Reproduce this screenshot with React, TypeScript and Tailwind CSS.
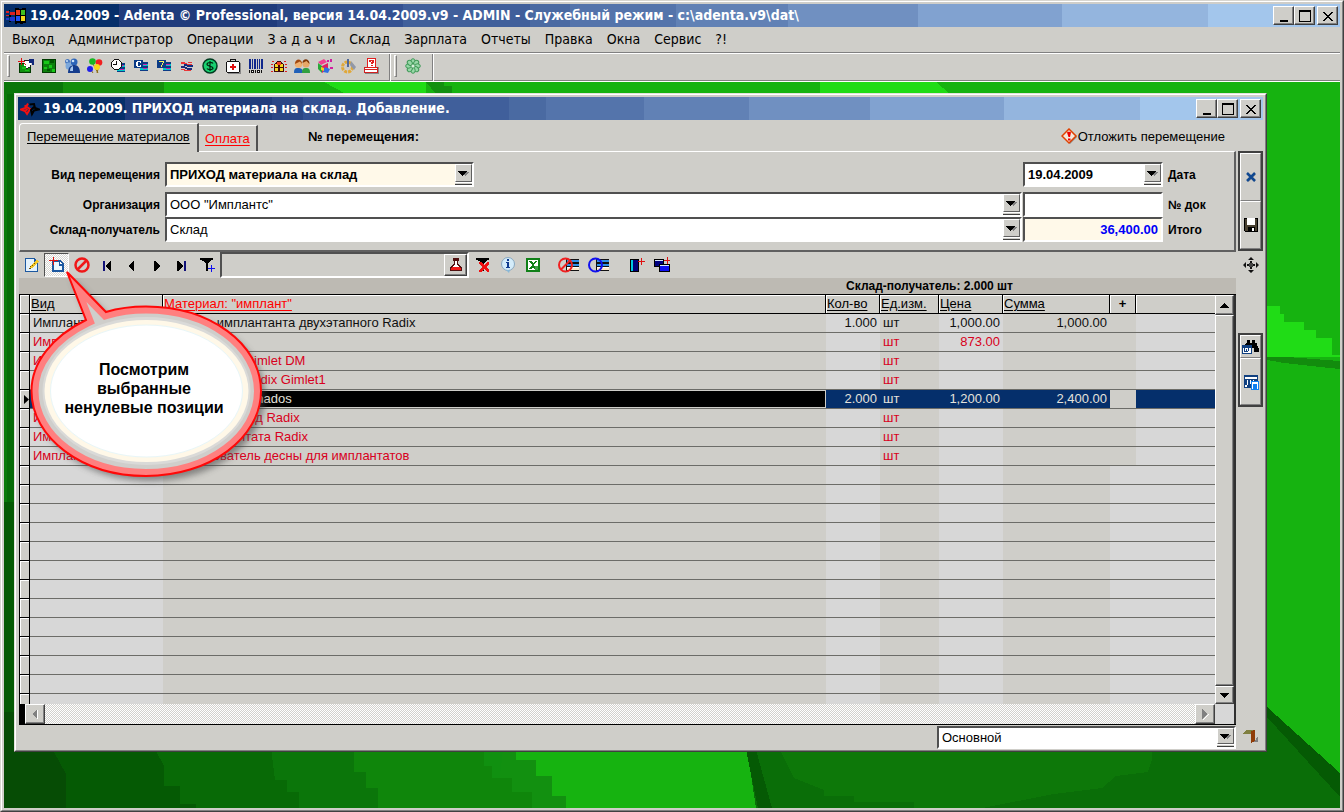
import type { ReactNode } from "react";

const TITLE_BG =
  "bg-[linear-gradient(90deg,#062f6a_8.6%,#203c7c_8.6%_20.4%,#2a4686_20.4%_22.9%,#345192_22.9%_29.9%,#405f9b_29.9%_39.4%,#4a6aa2_39.4%_42.4%,#5474ab_42.4%_50.3%,#6181b5_50.3%_58.7%,#7090c1_58.7%_68.4%,#81a2d0_68.4%_79.2%,#94b5de_79.2%_90.1%,#a3c6ec_90.1%)]";
const RAISED =
  "border border-t-white border-l-white border-r-[#404040] border-b-[#404040] bg-[#cfcec9] shadow-[inset_-1px_-1px_0_#808080]";
const SUNKEN =
  "border-t-2 border-l-2 border-r-2 border-b-2 border-t-[#505050] border-l-[#505050] border-r-white border-b-white";
const UI_FONT = "font-['DejaVu_Sans_Condensed','DejaVu_Sans',sans-serif]";

function Icon({ children, w = 16, h = 16, smooth = false }: { children: ReactNode; w?: number; h?: number; smooth?: boolean }) {
  return (
    <svg width={w} height={h} viewBox={`0 0 ${w} ${h}`} shapeRendering={smooth ? "auto" : "crispEdges"} fill="none" aria-hidden="true" className="shrink-0">
      {children}
    </svg>
  );
}

function WindowButtons() {
  const base = `flex h-[19px] w-[21px] items-center justify-center ${RAISED}`;
  return (
    <div className="flex">
      <button aria-label="Свернуть" className={base}>
        <Icon><path d="M4 12h8v2H4z" fill="#000" /></Icon>
      </button>
      <button aria-label="Развернуть" className={base}>
        <Icon><path d="M2 2h12v12H2zM3 4v9h10V4z" fill="#000" fillRule="evenodd" /></Icon>
      </button>
      <button aria-label="Закрыть" className={`ml-0.5 ${base}`}>
        <Icon><path d="M3 4h2v1h1v1h1v1h2V6h1V5h1V4h2v1h-1v1h-1v1h-1v1H9v1h1v1h1v1h1v1h1v1h-2v-1h-1v-1H9v-1H7v1H6v1H5v1H3v-1h1v-1h1v-1h1V9h1V8H6V7H5V6H4V5H3z" fill="#000" /></Icon>
      </button>
    </div>
  );
}

function Bars({ y = 4 }: { y?: number }) {
  return (
    <>
      <path d={`M7 ${y}h8v2H7zM7 ${y + 4}h8v2H7zM7 ${y + 8}h8v1H7z`} fill="#0b3b86" />
      <path d={`M7 ${y + 2}h8v2H7zM7 ${y + 6}h8v2H7z`} fill="#00c8c8" />
      <path d={`M10 ${y + 2}h4v1h-4zM10 ${y + 6}h4v1h-4z`} fill="#d020b0" />
    </>
  );
}

const mainTools: { name: string; smooth?: boolean; art: ReactNode }[] = [
  { name: "Пациент", art: <><path d="M1 5h12v10H1z" fill="#003c00" /><path d="M2 6h10v8H2z" fill="#109010" /><path d="M4 9h4v2H4zM7 12h4v1H7z" fill="#18c018" /><path d="M6 3h8v2h-1v2h-1v2h-2v1H8V8H6z" fill="#fff" /><path d="M6 2h5v1H6zM8 10h2v1H8zM10 9h2v1h-2zM12 7h1v2h-1z" fill="#222" /><path d="M11 1h5v6h-2V5h-3z" fill="#12287a" /><path d="M3 0h1v7H3zM0 3h7v1H0zM6 5h1v1H6zM7 6h1v1H7z" fill="#e01010" /></> },
  { name: "Рабочий стол", art: <><path d="M1 1h14v14H1z" fill="#003c00" /><path d="M2 2h12v12H2z" fill="#0d800d" /><path d="M3 3h5v3H3zM8 7h3v3H8zM3 9h3v2H3zM11 11h3v3h-3z" fill="#18c818" /><path d="M9 2h4v3H9zM6 11h3v2H6z" fill="#005800" /></> },
  { name: "Сотрудники", smooth: true, art: <><circle cx="3.500" cy="3.500" r="2.500" fill="#4878c0" /><circle cx="10" cy="4" r="3.500" fill="#2c64b8" /><ellipse cx="4.500" cy="8" rx="3" ry="3.500" fill="#7ca8dc" /><path d="M4 15c0-6 3-8 6.500-8s5.500 3 5.500 8z" fill="#143c8c" /><circle cx="9" cy="3" r="1.300" fill="#c8e0f8" /><path d="M6 13c0-3 1-4 3-5v5z" fill="#a8c8ee" /><circle cx="3" cy="3" r="1" fill="#c8e0f8" /></> },
  { name: "Праздники", smooth: true, art: <><path d="M6 6l5 9M12 7l-2 8M4 12l2 3" stroke="#8c6c10" /><circle cx="5.500" cy="3.500" r="3.300" fill="#18b820" /><circle cx="12" cy="4.500" r="3.300" fill="#f02020" /><circle cx="3" cy="11" r="3" fill="#2020e8" /><circle cx="10" cy="9" r="3" fill="#f8d818" /></> },
  { name: "Расписание", art: <><Bars y={5} /><path d="M4 1h5v1h1v1h1v1h1v5h-1v1h-1v1H9v1H4v-1H3v-1H2V9H1V4h1V3h1V2h1z" fill="#111" /><path d="M4 2h5v1h1v1h1v5h-1v1H9v1H4v-1H3V9H2V4h1V3h1z" fill="#fff" /><path d="M6 3h1v4H3V6h3z" fill="#111" /></> },
  { name: "Касса", art: <><Bars /><path d="M1 2h9v8H1z" fill="#0b3b86" /><path d="M4 3h4v2H7V4H5v4h2V7h1v2H4V8H3V4h1z" fill="#fff" /></> },
  { name: "Неделя", art: <><Bars /><path d="M1 2h9v8H1z" fill="#0b3b86" /><path d="M3 3h5v2H7v2H6v2H5V7h1V5h1V4H3z" fill="#f8f060" /></> },
  { name: "Обмен", art: <><path d="M2 4h4v1h2v1h5v2H8V7H6V6H2z" fill="#f03030" /><path d="M5 6h3v1h6v2H8V8H5z" fill="#102c80" /><path d="M2 8h4v1h2v1h5v2H8v-1H6v-1H2z" fill="#202878" /><path d="M2 11h4v1h6v1H5v-1H2zM9 4h4v1H9z" fill="#e83838" /></> },
  { name: "Оплата", smooth: true, art: <><circle cx="8" cy="8" r="7" fill="#18d070" stroke="#003c20" strokeWidth="1.500" /><path d="M11 5.500C10 4 5 4 5 6.300S11 8 11 10 6 12 5 10.500M8 3v10" stroke="#002810" strokeWidth="1.200" /></> },
  { name: "Лечение", art: <><path d="M3 5h13v11H3z" fill="#888" /><path d="M5 1h6v3h-1V2H6v2H5z" fill="#111" /><path d="M2 3h12v1h1v10h-1v1H2v-1H1V4h1z" fill="#111" /><path d="M2 4h12v10H2z" fill="#fff" /><path d="M7 6h2v2h2v2H9v2H7v-2H5V8h2z" fill="#e01010" /></> },
  { name: "Штрих-код", art: <><path d="M1 1h2v10H1zM4 1h1v10H4zM6 1h2v10H6zM9 1h1v10H9zM11 1h1v10h-1zM13 1h2v10h-2z" fill="#10288c" /><path d="M1 12h1v3H1zM3 12h3v3H3zM7 12h1v3H7zM9 12h3v3H9zM13 12h1v3h-1z" fill="#111" /><path d="M4 13h1v1H4zM10 13h1v1h-1z" fill="#fff" /></> },
  { name: "Склад", art: <><path d="M1 3h2v1H1zM13 3h2v1h-2zM0 6h2v1H0zM14 6h2v1h-2zM0 9h2v1H0zM14 9h2v1h-2zM0 13h2v1H0zM14 13h2v1h-2z" fill="#e02020" /><path d="M3 14V6h1V5h1V4h1V3h4v1h1v1h1v1h1v8z" fill="#400808" /><path d="M4 6h3v3H4zM9 6h3v3H9zM4 10h3v3H4zM9 10h3v3H9z" fill="#f4d820" /><path d="M6 4h4v3H6z" fill="#f04020" /></> },
  { name: "Клиенты", smooth: true, art: <><path d="M0 15c0-4 1-5 4-5s5 1 5 5z" fill="#2060b8" /><circle cx="4.500" cy="6" r="3.800" fill="#f0b070" /><path d="M1 6c0-6 7-6 7 0L6 3.500z" fill="#a04810" /><path d="M8 15c0-4 1-5 4-5s4 1 4 5z" fill="#30a040" /><circle cx="12" cy="6" r="3.500" fill="#e8a868" /><path d="M8.500 5c0-5 7-5 7 1l-3-3z" fill="#803808" /></> },
  { name: "Отчеты", smooth: true, art: <><path d="M1 4l6-3 3 3-6 3z" fill="#f04090" /><path d="M1 5l4 3v7l-4-4z" fill="#28a838" /><path d="M5 8l6-3v6l-6 4z" fill="#e02060" /><path d="M8 9l5 2-2 4-5-1z" fill="#3070e0" /><path d="M4 9l3 1v3l-3-1z" fill="#f0d020" /><path d="M10 2h2v2h-2zM13 1h2v3h-2zM13 9h3v2h-3z" fill="#d020a0" /></> },
  { name: "Настройки", smooth: true, art: <><circle cx="7.500" cy="9" r="5" stroke="#e0a838" strokeWidth="3" strokeDasharray="3 1" /><circle cx="7.500" cy="9" r="2" fill="#c8c8c8" /><path d="M7 1h2v8H7z" fill="#506898" /><path d="M11 3l5 6-2 3-4-5z" fill="#9098a8" /></> },
  { name: "Помощь", art: <><path d="M2 9h14v7H2z" fill="#888" /><path d="M1 9h14v6H1z" fill="#d02020" /><path d="M2 10h12v1H2zM2 12h12v2H2z" fill="#fff" /><path d="M4 0h9v10H4z" fill="#e02020" /><path d="M5 1h7v8H5z" fill="#fff" /><path d="M6 2h5v3h-1v1H8V4h1V3H8v1H6zM8 7h2v1H8z" fill="#e02020" /></> },
];

const menu = ["Выход", "Администратор", "Операции", "З а д а ч и", "Склад", "Зарплата", "Отчеты", "Правка", "Окна", "Сервис", "?!"];

function Combo({ id, value, bold = false, cream = false }: { id: string; value: string; bold?: boolean; cream?: boolean }) {
  return (
    <div className={`flex h-[25px] w-full ${SUNKEN} ${cream ? "bg-[#fff9e9]" : "bg-white"}`}>
      <select id={id} aria-label={value} defaultValue={value} className={`min-w-0 flex-1 appearance-none bg-transparent pl-[3px] text-[13px] outline-none ${bold ? "font-bold" : ""}`}>
        <option>{value}</option>
      </select>
      <span className="flex w-[17px] shrink-0 flex-col bg-[#cfcec9]">
        <span className="flex flex-1 items-center justify-center border border-t-white border-l-white border-r-[#606060] border-b-[#606060]">
          <Icon w={11} h={7}><path d="M3 2h8v1h-1v1H9v1H8v1H7V5H5z" fill="#808080" /><path d="M0 1h9v1H8v1H7v1H6v1H5v1H4V5H3V4H2V3H1V2H0z" fill="#000" /></Icon>
        </span>
        <span className="h-[3px] border-t border-b border-t-white border-b-[#404040]" />
      </span>
    </div>
  );
}

function ToolButton({ name, wide = false, pressed = false, children }: { name: string; wide?: boolean; pressed?: boolean; children: ReactNode }) {
  return (
    <button
      aria-label={name}
      className={`flex h-6 shrink-0 items-center justify-center ${wide ? "w-[30px]" : "w-[25px]"} ${pressed ? "border border-t-[#505050] border-l-[#505050] border-r-white border-b-white bg-[repeating-conic-gradient(#fff_0_25%,#d7d6d2_0_50%)] bg-[length:2px_2px]" : ""}`}
    >
      {children}
    </button>
  );
}

const Funnel = () => <path d="M1 1h13v2h-2v1h-1v1h-1v1H9v8H7V6H6V5H5V4H3V3H1z" fill="#000" />;
const TableArt = ({ ring }: { ring: ReactNode }) => (
  <Icon w={22}>
    <path d="M8 2h13v12H8z" fill="#111" />
    <path d="M9 3h12v2H9zM9 7h12v2H9z" fill="#3090e8" />
    <path d="M9 10h12v1H9z" fill="#fff" />
    <path d="M9 11h12v2H9z" fill="#ffe8c8" />
    {ring}
  </Icon>
);

type Row = { kind: string; name: string; qty?: string; unit: string; price?: string; sum?: string; state: "normal" | "zero" | "current" };
const rows: Row[] = [
  { kind: "Имплантаты", name: "Головка имплантанта двухэтапного Radix", qty: "1.000", unit: "шт", price: "1,000.00", sum: "1,000.00", state: "normal" },
  { kind: "Имплантаты", name: "Имплантат", unit: "шт", price: "873.00", state: "zero" },
  { kind: "Имплантаты", name: "Имплантаты Gimlet DM", unit: "шт", state: "zero" },
  { kind: "Имплантаты", name: "Имплантаты Radix Gimlet1", unit: "шт", state: "zero" },
  { kind: "Имплантаты", name: "Имплантат Granados", qty: "2.000", unit: "шт", price: "1,200.00", sum: "2,400.00", state: "current" },
  { kind: "Имплантаты", name: "Имплантат ввод Radix", unit: "шт", state: "zero" },
  { kind: "Имплантаты", name: "Ключ имплантата Radix", unit: "шт", state: "zero" },
  { kind: "Имплантаты", name: "Формирователь десны для имплантатов", unit: "шт", state: "zero" },
];
const emptyRows = Array.from({ length: 13 }, (_, i) => i);

function Marker({ current = false }: { current?: boolean }) {
  return (
    <td className="h-[19px] border-r border-b border-black bg-[#cfcec9] p-0 shadow-[inset_1px_1px_0_#fff]">
      {current && <svg width="5" height="9" viewBox="0 0 5 9" className="ml-1 block" aria-hidden="true"><path d="M0 0l5 4.500L0 9z" fill="#000" /></svg>}
    </td>
  );
}

function StockTable() {
  const th = "h-[19px] border-r border-b border-black bg-[#cfcec9] p-0 pl-px text-left leading-[18px] font-normal underline underline-offset-2 shadow-[inset_1px_1px_0_#fff]";
  const line = "h-[19px] overflow-hidden whitespace-nowrap border-b border-[#6c6c68] p-0 leading-[18px]";
  return (
    <table className="w-full table-fixed border-separate border-spacing-0 text-[13px]">
      <colgroup>
        <col className="w-[10px]" /><col className="w-[133px]" /><col /><col className="w-[54px]" /><col className="w-[59px]" />
        <col className="w-16" /><col className="w-[107px]" /><col className="w-[26px]" /><col className="w-[79px]" />
      </colgroup>
      <thead>
        <tr>
          <th className={th} aria-label="Строка" />
          <th className={th}>Вид</th>
          <th className={`${th} text-[#ff0000]`}>Материал: "имплант"</th>
          <th className={th}>Кол-во</th>
          <th className={th}>Ед.изм.</th>
          <th className={th}>Цена</th>
          <th className={th}>Сумма</th>
          <th className="border-r border-b border-black p-0 text-center leading-[18px] shadow-[inset_1px_1px_0_#fff]">+</th>
          <th className="border-b border-black p-0 shadow-[inset_1px_1px_0_#fff]" aria-label="Прочее" />
        </tr>
      </thead>
      <tbody>
        {rows.map((r, i) => {
          const cur = r.state === "current";
          const ink = cur ? "text-[#e4e2dc]" : r.state === "zero" ? "text-[#d80020]" : "text-[#101010]";
          const light = cur ? "bg-[#052f6b]" : "bg-[#d7d7d7]";
          const dark = cur ? "bg-[#052f6b]" : "bg-[#cfcec9]";
          return (
            <tr key={i} className={ink}>
              <Marker current={cur} />
              <td className={`${line} ${light} pl-[3px]`}>{r.kind}</td>
              <td className={`${line} pl-0.5 ${cur ? "bg-black shadow-[inset_-1px_-1px_0_#cfcec9,inset_0_1px_0_#cfcec9]" : "bg-[#cfcec9]"}`}>{r.name}</td>
              <td className={`${line} ${light} pr-[3px] text-right`}>{r.qty}</td>
              <td className={`${line} ${dark} pl-[3px]`}>{r.unit}</td>
              <td className={`${line} ${light} pr-[3px] text-right`}>{r.price}</td>
              <td className={`${line} ${dark} pr-[3px] text-right`}>{r.sum}</td>
              <td className={`${line} bg-[#cfcec9]`} />
              <td className={`${line} ${light}`} />
            </tr>
          );
        })}
        {emptyRows.map((i) => (
          <tr key={i}>
            <Marker />
            <td className={`${line} bg-[#d7d7d7]`} />
            <td className={`${line} bg-[#cfcec9]`} />
            <td className={`${line} bg-[#d7d7d7]`} />
            <td className={`${line} bg-[#cfcec9]`} />
            <td className={`${line} bg-[#d7d7d7]`} />
            <td className={`${line} bg-[#cfcec9]`} />
            <td className={`${line} bg-[#d7d7d7]`} />
            <td className={`${line} bg-[#d7d7d7]`} />
          </tr>
        ))}
      </tbody>
    </table>
  );
}

function Wallpaper() {
  return (
    <svg className="absolute inset-0 h-full w-full" viewBox="0 0 1336 726" preserveAspectRatio="none" shapeRendering="crispEdges" aria-hidden="true">
      <path d="M0 0h1336v726H0z" fill="#16b310" />
      <path d="M0 0h160v12H0z" fill="#138f0c" />
      <path d="M0 0h59v12H0z" fill="#0a760a" />
      <path d="M320 0l22 12h80V0zM816 0h116l14 12H816z" fill="#20dc16" />
      <path d="M422 0h18v4h8v8h-16z" fill="#129010" />
      <path d="M0 640h500v86H0z" fill="#109010" />
      <path d="M500 660h12v18h20v16h16v20h14v12h-70z" fill="#129010" />
      <path d="M0 660h480v24h8v12h20v14h20v16H0z" fill="#0f860b" />
      <path d="M0 650h338v20h12v20h12v16h12v20H0z" fill="#0b760a" />
      <path d="M0 650h268v24l3 24h12v12h12v16H0z" fill="#086a06" />
      <path d="M0 650h142l18 34v20h16v18h16v4H0z" fill="#055a04" />
      <path d="M0 650h38l12 20 12 22v34H0z" fill="#064c05" />
      <path d="M0 12h12v560H0z" fill="#076c07" />
      <path d="M0 12h3v408H0z" fill="#0a7a0a" />
      <path d="M0 420h12v214H0z" fill="#055a04" />
      <path d="M0 630h12v96H0z" fill="#064c05" />
      <path d="M742 660H1263V625L1336 691V726H752z" fill="#0a6e08" />
      <path d="M772 660h376v18l-4 12-32 4-14 12-48 6-72 14H910v-6h-60v-6h-30v-6l-30-12z" fill="#0d7809" />
      <path d="M742 668l12 58h14l-16-58z" fill="#055a04" />
      <path d="M1263 625l73 66v24l-73-80z" fill="#055a04" />
      <path d="M1263 224h13v8h4v8h20v8h12v8h16v17h8v2h-73z" fill="#20dc16" />
      <path d="M1263 275h20l53 4v8l-20-2-36-4-17-3z" fill="#128c0d" />
    </svg>
  );
}

function Callout() {
  return (
    <div className="pointer-events-none absolute top-[266px] left-[26px] z-10 h-[222px] w-[246px]">
      <svg width="246" height="222" viewBox="26 266 246 222" className="absolute inset-0" aria-hidden="true">
        <defs>
          <filter id="soft" x="-20%" y="-20%" width="140%" height="140%"><feGaussianBlur stdDeviation="3" /></filter>
          <path id="bubble" d="M66 271L105 311C118 307 131 305.500 145 305.500C209 305.500 260 343 260 390S209 475 145 475S30.500 437 30.500 390C30.500 361 52 335 85 319Z" />
          <clipPath id="bubbleClip"><use href="#bubble" /></clipPath>
        </defs>
        <use href="#bubble" transform="translate(4 5)" fill="#444" opacity="0.55" filter="url(#soft)" />
        <use href="#bubble" fill="#cfcecb" />
        <ellipse cx="145.500" cy="390" rx="104" ry="74" fill="#dadad8" />
        <ellipse cx="145.500" cy="390" rx="102" ry="71" fill="#fff8e8" />
        <ellipse cx="145.500" cy="390" rx="96" ry="66" fill="#fff" stroke="#e8f6f8" />
        <use href="#bubble" stroke="#ff7f7f" strokeWidth="14" fill="none" clipPath="url(#bubbleClip)" />
        <use href="#bubble" stroke="#ff0808" strokeWidth="2" fill="none" />
      </svg>
      <p className="relative pt-[93px] pr-3 text-center text-[16px] leading-[19px] font-bold">
        Посмотрим<br />выбранные<br />ненулевые позиции
      </p>
    </div>
  );
}

export default function App() {
  const lab = "self-center pr-[5px] text-right text-[12px] font-bold";
  const labRight = "self-center pl-[5px] text-[12px] font-bold";
  const box = `h-[25px] w-full min-w-0 px-[3px] text-[13px] font-bold outline-none ${SUNKEN}`;
  const side = "flex w-full items-center justify-center border border-t-white border-l-white border-r-[#808080] border-b-[#808080] bg-[#cfcec9]";
  return (
    <div className="relative flex h-screen w-full flex-col border border-t-[#d8d6d0] border-l-[#d8d6d0] border-r-[#404040] border-b-[#404040] bg-[#cfcec9] font-['Liberation_Sans',Arial,sans-serif] text-black">
      <div className="flex min-h-0 flex-1 flex-col border border-t-white border-l-white border-r-[#808080] border-b-[#808080] p-0.5">
        <header className={`flex h-[23px] shrink-0 items-center px-0.5 text-white ${TITLE_BG} ${UI_FONT}`}>
          <Icon w={20} h={20}>
            <path d="M9 2h4v1h3V2h4v15h-3v1h-3v-1h-3v1H9z" fill="#000" />
            <path d="M10 4h4v5h-4z" fill="#f03818" /><path d="M15 4h4v5h-4z" fill="#40c020" /><path d="M10 10h4v5h-4z" fill="#2050f0" /><path d="M15 10h4v5h-4z" fill="#f4d818" />
            <path d="M0 5h3v2H0zM4 6h5v3H4zM0 9h3v1H0z" fill="#e02020" /><path d="M0 12h3v2H0zM4 11h5v4H4z" fill="#2038d0" /><path d="M3 4h1v1H3zM3 9h2v2H3zM3 15h2v1H3z" fill="#000" />
          </Icon>
          <h1 className="min-w-0 flex-1 truncate pl-1 text-[14px] font-bold">19.04.2009 - Adenta © Professional, версия 14.04.2009.v9 - ADMIN - Служебный режим - c:\adenta.v9\dat\</h1>
          <WindowButtons />
        </header>
        <nav className={`flex h-[26px] shrink-0 items-center border-b border-[#808080] pl-px text-[14px] ${UI_FONT}`}>
          {menu.map((m) => <button key={m} className="px-[7px]">{m}</button>)}
        </nav>
        <div className="flex h-[29px] shrink-0 border-t border-b border-t-white border-b-white">
          <div className="flex w-[386px] items-center border-r border-b border-[#808080] pb-0.5 pl-[3px] shadow-[1px_0_0_#fff]">
            <span className="mr-2 h-[22px] w-[3px] border border-t-white border-l-white border-r-[#808080] border-b-[#808080]" />
            {mainTools.map((t) => (
              <button key={t.name} aria-label={t.name} className="flex h-[22px] w-[23px] items-center justify-start"><Icon smooth={t.smooth}>{t.art}</Icon></button>
            ))}
          </div>
          <div className="ml-px flex w-[42px] items-center border-r border-b border-[#808080] pb-0.5 pl-[3px] shadow-[1px_0_0_#fff]">
            <span className="mr-2 h-[22px] w-[3px] border border-t-white border-l-white border-r-[#808080] border-b-[#808080]" />
            <button aria-label="ICQ" className="p-0">
              <Icon smooth>
                {[0, 45, 90, 135, 180, 225, 270, 315].map((a) => <ellipse key={a} cx="8" cy="3.500" rx="2.200" ry="2.800" fill="#98d8a8" stroke="#409858" transform={`rotate(${a} 8 8)`} />)}
                <circle cx="8" cy="8" r="1.500" fill="#d8f0dc" />
              </Icon>
            </button>
          </div>
          <div className="ml-px flex-1 border-b border-[#808080]" />
        </div>

        <main className="relative flex min-h-0 flex-1 overflow-hidden pt-[11px] pr-[73px] pb-14 pl-2.5">
          <Wallpaper />
          <section className="relative flex min-h-0 min-w-0 flex-1 flex-col border border-t-[#e4e2dc] border-l-[#e4e2dc] border-r-[#404040] border-b-[#404040] bg-[#cfcec9]">
            <div className="flex min-h-0 flex-1 flex-col border border-t-white border-l-white border-r-[#808080] border-b-[#808080] px-0.5 pt-0.5">
              <header className={`flex h-[23px] shrink-0 items-center px-0.5 text-white ${TITLE_BG} ${UI_FONT}`}>
                <Icon w={20} h={18} smooth>
                  <path d="M8 3.500L5.500 8 1 9.500l4 1.500 2.500-2M4.500 5.500L10 9l-3 5-2-3" stroke="#f01010" strokeWidth="2" />
                  <path d="M9.500 4.500L14 4l1 4 4 1.500-5 1-2 3.500-1-4 3-3" stroke="#000" strokeWidth="2" />
                </Icon>
                <h2 className="min-w-0 flex-1 truncate pl-[3px] text-[14px] font-bold">19.04.2009. ПРИХОД материала на склад. Добавление.</h2>
                <WindowButtons />
              </header>

              <div className="flex min-h-0 flex-1">
                <div className="flex min-w-0 flex-1 flex-col pl-px">
                  <div className="flex h-[31px] shrink-0 items-end text-[13px]">
                    <button className="relative -mb-px flex h-[29px] w-[180px] shrink-0 items-center rounded-tl-sm border-t border-r-2 border-l border-t-white border-l-white border-r-[#505050] bg-[#cfcec9] pb-0.5 pl-[7px] underline underline-offset-2">Перемещение материалов</button>
                    <button className="flex h-[26px] w-[59px] shrink-0 items-center border-t border-r-2 border-t-white border-r-[#505050] pl-1.5 text-[#ff0000] underline underline-offset-2">Оплата</button>
                    <span className="flex h-[29px] flex-1 items-center pl-[50px] font-bold">№ перемещения:</span>
                    <button className="flex h-[29px] items-center pr-[11px]">
                      <Icon w={17} h={17} smooth><path d="M9 2l7 7-7 7-7-7z" fill="#888" /><path d="M8 1l7 7-7 7-7-7z" fill="#f4e8dc" stroke="#e04000" strokeWidth="1.500" /><path d="M6 4.500C6 3.500 10 3.500 10 4.500L9 9H7.500zM7 10.500h2.500v2H7z" fill="#f00000" /></Icon>
                      Отложить перемещение
                    </button>
                  </div>

                  <div className="grid shrink-0 grid-cols-[145px_minmax(0,1fr)_140px_71px] border-t border-r-2 border-b-2 border-l border-t-white border-l-white border-r-[#606060] border-b-[#606060] pt-2.5 pb-2">
                    <label htmlFor="kind" className={`${lab} pb-[5px]`}>Вид перемещения</label>
                    <div className="w-[309px] max-w-full pb-[5px]"><Combo id="kind" value="ПРИХОД материала на склад" bold cream /></div>
                    <div className="pb-[5px]"><Combo id="date" value="19.04.2009" bold /></div>
                    <label htmlFor="date" className={`${labRight} pb-[5px]`}>Дата</label>

                    <label htmlFor="org" className={lab}>Организация</label>
                    <div className="pr-px"><Combo id="org" value={'ООО "Имплантс"'} /></div>
                    <input id="doc" className={`${box} bg-white`} />
                    <label htmlFor="doc" className={labRight}>№ док</label>

                    <label htmlFor="target" className={lab}>Склад-получатель</label>
                    <div className="pr-px"><Combo id="target" value="Склад" /></div>
                    <input id="total" readOnly value="36,400.00" className={`${box} bg-[#fff9e9] text-right text-[#0000f8]`} />
                    <label htmlFor="total" className={labRight}>Итого</label>
                  </div>

                  <div className="flex h-[26px] shrink-0 items-center">
                    <ToolButton name="Изменить"><Icon><path d="M1 1h10v1h1v1h1v1h1v11H1z" fill="#1c58a0" /><path d="M2 2h8v3h3v9H2z" fill="#e4f2fc" /><path d="M6 11V9l7-6 2 2-7 6z" fill="#f4c828" /><path d="M5 11h2v1H5zM6 9h1v1H6zM8 8h1v1H8zM10 6h1v1h-1z" fill="#705010" /></Icon></ToolButton>
                    <ToolButton name="Добавить" pressed><Icon><path d="M3 3h9v1h1v1h1v1h1v9H3z" fill="#1c58a0" /><path d="M5 5h5v4h3v4H5z" fill="#eaf6fe" /><path d="M11 5h1v1h1v1h-2z" fill="#fff" /><path d="M4 0h1v8H4zM0 3h9v1H0z" fill="#e01010" /></Icon></ToolButton>
                    <ToolButton name="Удалить"><Icon smooth><circle cx="8" cy="8" r="6.500" stroke="#f01818" strokeWidth="2.500" /><path d="M3.500 12.500l9-9" stroke="#f01818" strokeWidth="2.500" /></Icon></ToolButton>
                    <ToolButton name="Первая"><Icon><path d="M4 4h2v10H4z" fill="#101078" /><path d="M12 4v10h-1l-5-5 5-5z" fill="#000" /></Icon></ToolButton>
                    <ToolButton name="Предыдущая"><Icon><path d="M10 4v10H9L4 9l5-5z" fill="#000" /></Icon></ToolButton>
                    <ToolButton name="Следующая"><Icon><path d="M5 4v10h1l5-5-5-5z" fill="#000" /></Icon></ToolButton>
                    <ToolButton name="Последняя"><Icon><path d="M3 4v10h1l5-5-5-5z" fill="#000" /><path d="M10 4h2v10h-2z" fill="#101078" /></Icon></ToolButton>
                    <ToolButton name="Фильтр"><Icon><Funnel /><path d="M11 8h2v3h2v2h-2v3h-2v-3H9v-2h2z" fill="#cfcec9" /><path d="M12 8h1v3h3v1h-3v3h-1v-3H9v-1h3z" fill="#1010f0" /></Icon></ToolButton>
                    <div className={`ml-px flex h-[26px] w-[249px] shrink-0 bg-[#cfcec9] ${SUNKEN}`}>
                      <input aria-label="Поиск" className="min-w-0 flex-1 bg-transparent px-1 text-[13px] outline-none" />
                      <button aria-label="Искать" className={`flex w-[23px] items-center justify-center ${RAISED}`}>
                        <Icon><path d="M5 1h6v3h-1v3h1v1h1v1h1v1h1v4H2v-4h1V9h1V8h1V7h1V4H5z" fill="#501010" /><path d="M7 4h2v4h1v1h1v1H5V9h1V8h1z" fill="#fff" /><path d="M4 10h8v1h1v2H3v-2h1z" fill="#f01818" /></Icon>
                      </button>
                    </div>
                    <span className="flex pl-px">
                      <ToolButton name="Снять фильтр"><Icon><Funnel /><path d="M4 5h2l3 3 3-3h2v2l-3 3 3 3v2h-2l-3-3-3 3H4v-2l3-3-3-3z" fill="#f01010" /></Icon></ToolButton>
                      <ToolButton name="Информация"><Icon smooth><circle cx="8" cy="7" r="6.500" fill="#d4ecfa" stroke="#88a8c0" /><path d="M6 13l3 3 1-3z" fill="#88b8d8" /><path d="M7 2h2v2H7zM6 5h3v5h1v1H6v-1h1V6H6z" fill="#103c90" /></Icon></ToolButton>
                      <ToolButton name="Excel"><Icon><path d="M1 1h14v14H1z" fill="#108018" /><path d="M3 3h10v10H3z" fill="#fff" /><path d="M4 4h3l1 2 2-2h2L9 8l3 4H9L8 10l-2 2H3l4-4z" fill="#108018" /><path d="M10 9h3v4h-3z" fill="#40a048" /></Icon></ToolButton>
                    </span>
                    <span className="flex pl-[9px]">
                      <ToolButton name="Скрыть строки" wide><TableArt ring={<g shapeRendering="auto"><circle cx="7.500" cy="8" r="6.500" stroke="#f02020" strokeWidth="2" /><path d="M3 12.500l9-9" stroke="#f02020" strokeWidth="2" /></g>} /></ToolButton>
                      <ToolButton name="Показать строки" wide><TableArt ring={<circle cx="7.500" cy="8" r="6.500" stroke="#1010f0" strokeWidth="2" shapeRendering="auto" />} /></ToolButton>
                    </span>
                    <span className="flex pl-2.5">
                      <ToolButton name="Новая книга"><Icon><path d="M1 2h9v13H1z" fill="#000" /><path d="M2 3h7v11H2z" fill="#000078" /><path d="M2 3h2v11H2z" fill="#00c8e0" /><path d="M12 1h1v3h3v1h-3v3h-1V5H9V4h3z" fill="#e01010" /></Icon></ToolButton>
                      <ToolButton name="Копия окна"><Icon><path d="M0 2h10v8H0z" fill="#000" /><path d="M1 3h8v6H1z" fill="#000080" /><path d="M1 3h8v1H1z" fill="#d8e8ff" /><path d="M5 7h11v8H5z" fill="#000" /><path d="M6 8h9v6H6z" fill="#1010f0" /><path d="M6 8h9v1H6z" fill="#d8e8ff" /><path d="M13 0h1v3h2v1h-2v3h-1V4h-3V3h3z" fill="#e01010" /></Icon></ToolButton>
                    </span>
                  </div>

                  <div className="h-4 shrink-0 bg-[#bdbab3] pr-[223px] text-right text-[12px] leading-4 font-bold">Склад-получатель: 2.000 шт</div>

                  <div className="flex min-h-0 flex-1 flex-col border-t border-b border-l border-black">
                    <div className="flex min-h-0 flex-1 border-r-2 border-[#303030]">
                      <div className="relative min-h-0 flex-1 overflow-hidden"><StockTable /></div>
                      <div className="flex w-[19px] shrink-0 flex-col">
                        <button aria-label="Вверх" className={`flex h-5 items-center justify-center ${RAISED}`}><Icon w={9} h={5}><path d="M4 0h1v1h1v1h1v1h1v1h1v1H0V4h1V3h1V2h1V1h1z" fill="#000" /></Icon></button>
                        <div className={`flex-1 ${RAISED}`} />
                        <button aria-label="Вниз" className={`flex h-[18px] items-center justify-center ${RAISED}`}><Icon w={9} h={5}><path d="M0 0h9v1H8v1H7v1H6v1H5v1H4V4H3V3H2V2H1V1H0z" fill="#000" /></Icon></button>
                      </div>
                    </div>
                    <div className="flex h-5 shrink-0 border-r-2 border-[#303030] bg-[#d7d7d7]">
                      <span className="w-[5px] bg-black" />
                      <button aria-label="Влево" className={`flex w-5 items-center justify-center ${RAISED}`}><Icon w={6} h={10}><path d="M5 0v10L0 5z" fill="#808080" /><path d="M5 1h1v9H5z" fill="#fff" /></Icon></button>
                      <span className="flex-1 bg-[repeating-conic-gradient(#fff_0_25%,#d2d1cd_0_50%)] bg-[length:2px_2px]" />
                      <button aria-label="Вправо" className={`flex w-5 items-center justify-center ${RAISED}`}><Icon w={7} h={11}><path d="M1 11l6-5-1-1-5 5z" fill="#fff" /><path d="M0 0v10l5-5z" fill="#808080" /></Icon></button>
                      <span className="w-[19px]" />
                    </div>
                  </div>

                  <div className="flex h-[25px] shrink-0 justify-end pt-px pb-px">
                    <div className="flex w-[299px] *:h-[23px]"><Combo id="profile" value="Основной" /></div>
                  </div>
                </div>

                <aside className="flex w-[27px] shrink-0 flex-col pt-[31px] pl-0.5">
                  <div className="flex flex-col border-2 border-[#404040]">
                    <button aria-label="Отмена" className={`${side} h-12`}><Icon w={14} h={14} smooth><path d="M4 4l7 7M11 4l-7 7" stroke="#909090" strokeWidth="2" /><path d="M3 3l8 8M11 3l-8 8" stroke="#104890" strokeWidth="2.500" /></Icon></button>
                    <button aria-label="Сохранить" className={`${side} h-12`}><Icon><path d="M1 1h14v14H2l-1-1z" fill="#000" /><path d="M2 2h12v12H2z" fill="#484030" /><path d="M4 1h8v7H4z" fill="#fff" /><path d="M5 10h7v5H5z" fill="#000" /><path d="M9 11h2v3H9z" fill="#fff" /></Icon></button>
                  </div>
                  <button aria-label="Переместить" className="mt-1.5 mb-[60px] self-center"><Icon smooth><path d="M8 0l3 3H5zM8 16l3-3H5zM0 8l3-3v6zM16 8l-3-3v6zM7 4h2v2H7zM7 10h2v2H7zM4 7h2v2H4zM10 7h2v2h-2z" fill="#111" /><path d="M6 6h4v4H6z" fill="#444" /></Icon></button>
                  <div className="flex flex-col border-2 border-[#404040]">
                    <button aria-label="Найти" className={`${side} h-[23px]`}><Icon w={17}><path d="M5 1h3v3h2V1h3v3h2v3h1v2h1v4h-5V9H8v4H2V7l2-3h1z" fill="#000" /><path d="M0 6h10v9H0z" fill="#104080" /><path d="M1 9h8v5H1z" fill="#fff" /><path d="M2 9h1v3H2zM4 10h1v2H4zM6 9h1v3H6zM2 12h4v1H2z" fill="#104080" /></Icon></button>
                    <button aria-label="Таблица" className={`${side} h-[47px]`}><Icon><path d="M1 1h14v13H1z" fill="#104080" /><path d="M2 3h12v2H2zM4 6h1v5H4zM7 6h1v4H7zM10 6h1v2h-1zM2 11h2v2H2z" fill="#fff" /><path d="M8 7h8v9H8z" fill="#1080f0" /><path d="M9 8h6v7h-1v-5h-4v5H9z" fill="#fff" /></Icon></button>
                  </div>
                  <button aria-label="Выход" className="mt-auto mb-1.5 self-center"><Icon w={17} h={16}><path d="M12 14h4V8z" fill="#808080" /><path d="M4 2h9v4H1z" fill="#808040" /><path d="M9 3l4-1v11l-4 2z" fill="#903c08" /></Icon></button>
                </aside>
              </div>
            </div>
          </section>
        </main>
      </div>
      <Callout />
    </div>
  );
}
